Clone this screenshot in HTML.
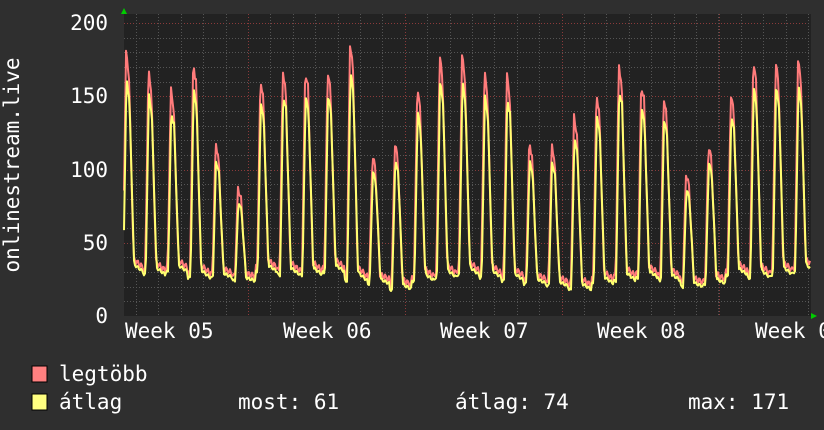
<!DOCTYPE html>
<html><head><meta charset="utf-8"><style>
html,body{margin:0;padding:0;background:#2f2f2f;}
body{width:824px;height:430px;overflow:hidden;position:relative;font-family:"DejaVu Sans Mono","Liberation Mono",monospace;color:#fff;}
svg{position:absolute;left:0;top:0}
text{font-family:"DejaVu Sans Mono","Liberation Mono",monospace;fill:#fff;font-size:21px}
</style></head><body>
<svg id="g" width="824" height="430" viewBox="0 0 824 430">
<rect x="124" y="14" width="687" height="302" fill="#222"/>
<g id="grid"></g>
<polyline id="mx" fill="none" stroke="#ff7b7b" stroke-width="2" stroke-linejoin="round"/>
<polyline id="av" fill="none" stroke="#ffff70" stroke-width="2" stroke-linejoin="round"/>
<polygon points="121,14 127,14 124,8" fill="#0c0"/>
<polygon points="811,313 811,319 817,316" fill="#0c0"/>
<g text-anchor="end">
<text x="108" y="30">200</text>
<text x="108" y="103">150</text>
<text x="108" y="177">100</text>
<text x="108" y="250">50</text>
<text x="108" y="323">0</text>
</g>
<text transform="translate(19,165) rotate(-90)" text-anchor="middle">onlinestream.live</text>
<text x="125" y="338">Week 05</text>
<text x="283" y="338">Week 06</text>
<text x="440" y="338">Week 07</text>
<text x="597" y="338">Week 08</text>
<text x="755" y="338">Week 0</text>
<rect x="32" y="366" width="15" height="16" fill="#ff8080" stroke="#000" stroke-width="1"/>
<rect x="32" y="394" width="15" height="16" fill="#ffff80" stroke="#000" stroke-width="1"/>
<text x="59" y="381">legtöbb</text>
<text x="59" y="409">átlag</text>
<text x="238" y="409">most: 61</text>
<text x="455" y="409">átlag: 74</text>
<text x="688" y="409">max: 171</text>
</svg>
<script>
var ns="http://www.w3.org/2000/svg",grid=document.getElementById('grid');
function y(v){return 316-v*293/200;}
function ln(x1,y1,x2,y2,c){var l=document.createElementNS(ns,'line');l.setAttribute('x1',x1);l.setAttribute('y1',y1);l.setAttribute('x2',x2);l.setAttribute('y2',y2);l.setAttribute('stroke',c);l.setAttribute('stroke-width',1);l.setAttribute('stroke-dasharray','1,2');grid.appendChild(l);}
for(var v=10;v<=200;v+=10){ln(124,Math.round(y(v))+.5,811,Math.round(y(v))+.5,v%50==0?'#8a3a3a':'#555');}
for(var x=136;x<811;x+=22.4){ln(Math.round(x)+.5,14,Math.round(x)+.5,316,'#555');}
[248,405,562,719].forEach(function(x){ln(x+.5,14,x+.5,316,'#8a3a3a');});
var pk=[180,168,155,173,118,87,162,168,168,168,186,110,118,155,178,178,167,165,118,117,136,152,172,159,150,97,117,152,174,174,175];
var lo=[30,28,30,26,26,24,30,28,28,30,24,22,18,24,26,28,26,24,22,20,18,22,24,26,24,20,22,28,26,28,30];
function sh(p){if(p<0.1)return 0.0;if(p<0.24)return (p-0.1)/0.14;if(p<0.36)return 1-(p-0.24)*0.8;if(p<0.58)return 0.9*(1-(p-0.36)/0.22)+0.04;return 0.04*(1-(p-0.58)/0.42);}
var a=[],b=[];
for(var x=124;x<=810;x++){var t=(x-126)/22.4+0.24;var i=Math.floor(t);var p=t-i;i=Math.max(0,Math.min(pk.length-1,i));var P=pk[i],L=lo[i];var n=Math.sin(x*1.7)*2;
var vm=L+3+(P-L-3)*sh(p)+n;var va=L+(P*0.9-L)*sh(Math.max(0,p-0.02))+n*0.5;
a.push(x+','+y(vm).toFixed(1));b.push(x+','+y(va).toFixed(1));}
document.getElementById('mx').setAttribute('points',a.join(' '));
document.getElementById('av').setAttribute('points',b.join(' '));
</script>
</body></html>
